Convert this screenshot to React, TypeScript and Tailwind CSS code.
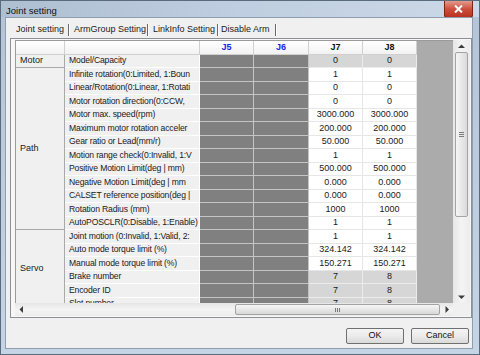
import React from 'react';

type Row = { label: string; j7: string; j8: string; ro?: boolean };

const motorRow: Row = { label: 'Model/Capacity', j7: '0', j8: '0', ro: true };

// labels are cut the same way the grid cuts them
const pathRows: Row[] = [
  { label: 'Infinite rotation(0:Limited, 1:Boun', j7: '1', j8: '1' },
  { label: 'Linear/Rotation(0:Linear, 1:Rotati', j7: '0', j8: '0' },
  { label: 'Motor rotation direction(0:CCW,', j7: '0', j8: '0' },
  { label: 'Motor max. speed(rpm)', j7: '3000.000', j8: '3000.000' },
  { label: 'Maximum motor rotation acceler', j7: '200.000', j8: '200.000' },
  { label: 'Gear ratio or Lead(mm/r)', j7: '50.000', j8: '50.000' },
  { label: 'Motion range check(0:Invalid, 1:V', j7: '1', j8: '1' },
  { label: 'Positive Motion Limit(deg | mm)', j7: '500.000', j8: '500.000' },
  { label: 'Negative Motion Limit(deg | mm', j7: '0.000', j8: '0.000' },
  { label: 'CALSET reference position(deg |', j7: '0.000', j8: '0.000' },
  { label: 'Rotation Radius (mm)', j7: '1000', j8: '1000' },
  { label: 'AutoPOSCLR(0:Disable, 1:Enable)', j7: '1', j8: '1' },
];

const servoRows: Row[] = [
  { label: 'Joint motion (0:Invalid, 1:Valid, 2:', j7: '1', j8: '1' },
  { label: 'Auto mode torque limit (%)', j7: '324.142', j8: '324.142' },
  { label: 'Manual mode torque limit (%)', j7: '150.271', j8: '150.271' },
  { label: 'Brake number', j7: '7', j8: '8', ro: true },
  { label: 'Encoder ID', j7: '7', j8: '8', ro: true },
  { label: 'Slot number', j7: '7', j8: '8', ro: true },
];

const Arrow = ({ dir }: { dir: 'up' | 'down' | 'left' | 'right' }) => {
  const pts = {
    up: '0,4 3.5,0.5 7,4',
    down: '0,0.5 3.5,4 7,0.5',
    left: '4,0 0.5,3.5 4,7',
    right: '0.5,0 4,3.5 0.5,7',
  }[dir];
  const vert = dir === 'up' || dir === 'down';
  return (
    <svg width={vert ? 7 : 5} height={vert ? 5 : 7} viewBox={vert ? '0 0 7 5' : '0 0 5 7'}>
      <polygon points={pts} fill="#3c3c3c" />
    </svg>
  );
};

const DataRow = ({ r }: { r: Row }) => (
  <>
    <div className="flex items-center pl-[4px] bg-[#f0f0f0] border-r border-b border-r-[#ffffff] border-b-[#ffffff] overflow-hidden whitespace-nowrap text-[8.6px] tracking-[-0.15px] text-[#1a1a1a]">
      {r.label}
    </div>
    <div className="bg-[#808080] border-r border-b border-[#c4c4c4]" />
    <div className="bg-[#808080] border-r border-b border-[#c4c4c4]" />
    <div
      className={`flex items-center justify-center border-r border-b ${r.ro ? 'bg-[#d6d6d6] border-[#ececec]' : 'bg-white border-[#e6e6e6]'} text-[#1a1a1a]`}
    >
      {r.j7}
    </div>
    <div
      className={`flex items-center justify-center border-r border-b ${r.ro ? 'bg-[#d6d6d6] border-[#ececec]' : 'bg-white border-[#e6e6e6]'} text-[#1a1a1a]`}
    >
      {r.j8}
    </div>
  </>
);

export default function App() {
  return (
    <div className="w-[480px] h-[355px] flex flex-col bg-gradient-to-b from-[#b4c4d6] to-[#c6d5e6] border border-[#5b6b7e] font-['Liberation_Sans',Arial,sans-serif] text-[9px] text-black overflow-hidden">
      {/* title bar */}
      <div className="h-[16px] flex items-start bg-gradient-to-r from-[#aebfd2] via-[#bfcee0] to-[#cbd8e7]">
        <span className="ml-[5px] mt-[3px] text-[9.5px] text-[#111]">Joint setting</span>
        <button className="ml-auto mr-[6px] w-[29px] h-[17px] flex items-center justify-center rounded-b-[3px] border border-t-0 border-[#7d2418] bg-gradient-to-b from-[#e29a8b] via-[#cd4f3c] to-[#b8321f]">
          <svg width="9" height="8" viewBox="0 0 9 8">
            <path d="M1 0.5 L8 7.5 M8 0.5 L1 7.5" stroke="#ffffff" strokeWidth="2" />
          </svg>
        </button>
      </div>

      {/* client area */}
      <div className="ml-[4px] mr-[6px] h-[332px] bg-[#f0f0f0] border border-[#8e9db0] flex flex-col">
        {/* tabs */}
        <div className="mt-[3px] h-[17px] ml-[4px] flex items-center text-[#222]">
          <div className="w-[58px] pl-[6px] flex items-center">Joint setting</div>
          <span className="h-[12px] w-px bg-[#6a6a6a]" />
          <span className="h-[12px] w-px bg-white" />
          <div className="w-[77px] pl-[4px]">ArmGroup Setting</div>
          <span className="h-[12px] w-px bg-[#6a6a6a]" />
          <span className="h-[12px] w-px bg-white" />
          <div className="w-[68px] pl-[4px]">LinkInfo Setting</div>
          <span className="h-[12px] w-px bg-[#6a6a6a]" />
          <span className="h-[12px] w-px bg-white" />
          <div className="w-[56px] pl-[2px]">Disable Arm</div>
          <span className="h-[12px] w-px bg-[#6a6a6a]" />
          <span className="h-[12px] w-px bg-white" />
        </div>

        {/* tab page */}
        <div className="ml-[4px] w-[462px] h-[280px] border border-[#8c9096] bg-[#f7f7f7] pl-[4px] pt-[1px]">
          <div className="w-[455px] h-[276px] flex flex-col">
            <div className="h-[263px] flex">
              {/* cells */}
              <div className="w-[438px] h-[263px] bg-[#ababab] overflow-hidden border-l border-t border-[#9a9a9a]">
                <div className="grid grid-cols-[49px_135px_54px_55px_54px_54px] auto-rows-[13.5px] w-[401px]">
                  {/* header */}
                  <div className="bg-gradient-to-b from-white to-[#f2f2f2] border-r border-b border-[#d0d0d0]" />
                  <div className="bg-gradient-to-b from-white to-[#f2f2f2] border-r border-b border-[#d0d0d0]" />
                  <div className="flex items-center justify-center font-bold text-[#1a1aee] bg-gradient-to-b from-white to-[#f2f2f2] border-r border-b border-[#d0d0d0]">J5</div>
                  <div className="flex items-center justify-center font-bold text-[#1a1aee] bg-gradient-to-b from-white to-[#f2f2f2] border-r border-b border-[#d0d0d0]">J6</div>
                  <div className="flex items-center justify-center font-bold text-[#111] bg-gradient-to-b from-white to-[#f2f2f2] border-r border-b border-[#d0d0d0]">J7</div>
                  <div className="flex items-center justify-center font-bold text-[#111] bg-gradient-to-b from-white to-[#f2f2f2] border-r border-b border-[#d0d0d0]">J8</div>

                  {/* Motor */}
                  <div className="flex items-center pl-[4px] bg-[#f0f0f0] border-r border-b border-[#a9a9a9] text-[#1a1a1a]">Motor</div>
                  <DataRow r={motorRow} />

                  {/* Path */}
                  <div className="row-span-12 flex items-center pl-[4px] bg-[#f0f0f0] border-r border-b border-[#a9a9a9] text-[#1a1a1a]">Path</div>
                  {pathRows.map((r) => (
                    <DataRow key={r.label} r={r} />
                  ))}

                  {/* Servo */}
                  <div className="row-span-6 flex items-start pt-[32px] pl-[4px] bg-[#f0f0f0] border-r border-[#a9a9a9] text-[#1a1a1a]">Servo</div>
                  {servoRows.map((r) => (
                    <DataRow key={r.label} r={r} />
                  ))}
                </div>
              </div>

              {/* vertical scrollbar */}
              <div className="w-[17px] h-[263px] flex flex-col bg-gradient-to-r from-[#e6e6e6] via-[#f4f4f4] to-[#ececec]">
                <div className="h-[12px] flex items-center justify-center">
                  <Arrow dir="up" />
                </div>
                <div className="mx-[2px] h-[165px] rounded-[2px] border border-[#a3a3a3] bg-gradient-to-r from-[#f6f6f6] to-[#dadada] flex flex-col items-center justify-center gap-[1px]">
                  <span className="w-[5px] h-px bg-[#7a7a7a]" />
                  <span className="w-[5px] h-px bg-[#7a7a7a]" />
                  <span className="w-[5px] h-px bg-[#7a7a7a]" />
                </div>
                <div className="flex-1" />
                <div className="h-[12px] flex items-center justify-center">
                  <Arrow dir="down" />
                </div>
              </div>
            </div>

            {/* horizontal scrollbar */}
            <div className="h-[13px] flex">
              <div className="w-[438px] flex bg-gradient-to-b from-[#e6e6e6] via-[#f4f4f4] to-[#ececec]">
                <div className="w-[12px] flex items-center justify-center">
                  <Arrow dir="left" />
                </div>
                <div className="w-[208px]" />
                <div className="w-[205px] my-[1px] rounded-[2px] border border-[#a3a3a3] bg-gradient-to-b from-[#f6f6f6] to-[#d8d8d8] flex items-center justify-center gap-[1px]">
                  <span className="w-px h-[4px] bg-[#7a7a7a]" />
                  <span className="w-px h-[4px] bg-[#7a7a7a]" />
                  <span className="w-px h-[4px] bg-[#7a7a7a]" />
                </div>
                <div className="flex-1" />
                <div className="w-[12px] flex items-center justify-center">
                  <Arrow dir="right" />
                </div>
              </div>
              <div className="w-[17px] bg-[#f0f0f0]" />
            </div>
          </div>
        </div>

        {/* buttons */}
        <div className="mt-[10px] flex justify-end gap-[7px] mr-[3px]">
          <button className="w-[58px] h-[16px] rounded-[2px] border border-[#707070] bg-gradient-to-b from-[#f4f4f4] via-[#ebebeb] to-[#d9d9d9] text-[#111] flex items-center justify-center">
            OK
          </button>
          <button className="w-[58px] h-[16px] rounded-[2px] border border-[#707070] bg-gradient-to-b from-[#f4f4f4] via-[#ebebeb] to-[#d9d9d9] text-[#111] flex items-center justify-center">
            Cancel
          </button>
        </div>
      </div>
    </div>
  );
}
